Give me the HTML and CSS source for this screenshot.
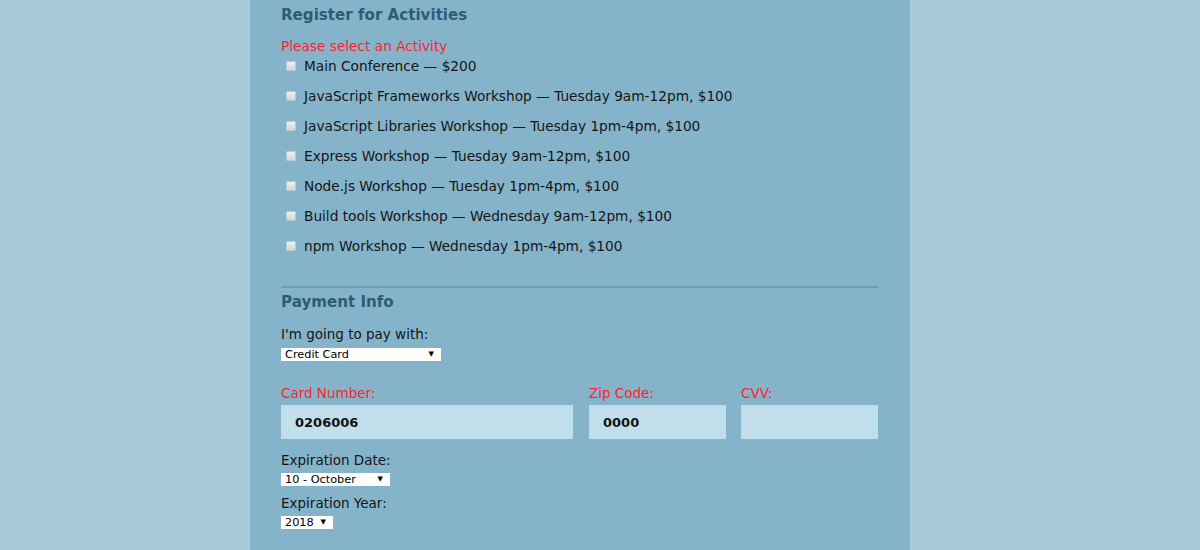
FILE: index.html
```html
<!DOCTYPE html>
<html>
<head>
<meta charset="utf-8">
<link rel="stylesheet" href="styles.css">
</head>
<body>
<div class="page">
  <form class="column">
    <fieldset class="activities">
      <h2 class="legend">Register for Activities</h2>
      <p class="error">Please select an Activity</p>
      <label class="activity"><input type="checkbox"><span>Main Conference — $200</span></label>
      <label class="activity"><input type="checkbox"><span>JavaScript Frameworks Workshop — Tuesday 9am-12pm, $100</span></label>
      <label class="activity"><input type="checkbox"><span>JavaScript Libraries Workshop — Tuesday 1pm-4pm, $100</span></label>
      <label class="activity"><input type="checkbox"><span>Express Workshop — Tuesday 9am-12pm, $100</span></label>
      <label class="activity"><input type="checkbox"><span>Node.js Workshop — Tuesday 1pm-4pm, $100</span></label>
      <label class="activity"><input type="checkbox"><span>Build tools Workshop — Wednesday 9am-12pm, $100</span></label>
      <label class="activity"><input type="checkbox"><span>npm Workshop — Wednesday 1pm-4pm, $100</span></label>
    </fieldset>
    <fieldset class="payment">
      <h2 class="legend">Payment Info</h2>
      <label class="label">I'm going to pay with:</label>
      <div class="select sel-pay"><span>Credit Card</span><span class="arrow">▼</span></div>
      <div class="card-row">
        <div class="field f-card">
          <label class="label red">Card Number:</label>
          <input class="text" type="text" value="0206006">
        </div>
        <div class="field f-zip">
          <label class="label red">Zip Code:</label>
          <input class="text" type="text" value="0000">
        </div>
        <div class="field f-cvv">
          <label class="label red">CVV:</label>
          <input class="text" type="text" value="">
        </div>
      </div>
      <label class="label exp">Expiration Date:</label>
      <div class="select sel-month"><span>10 - October</span><span class="arrow">▼</span></div>
      <label class="label exp">Expiration Year:</label>
      <div class="select sel-year"><span>2018</span><span class="arrow">▼</span></div>
    </fieldset>
  </form>
</div>
</body>
</html>
```

FILE: styles.css
```css
html, body {
  margin: 0;
  padding: 0;
  height: 100%;
}
body {
  background: #a9cad7;
  font-family: "DejaVu Sans", "Liberation Sans", sans-serif;
  color: #151515;
  overflow: hidden;
}
.page {
  display: flex;
  justify-content: center;
  height: 100%;
}
.column {
  width: 660px;
  margin-right: 40px;
  background: #85b4ca;
  padding: 0 32px 0 31px;
  box-sizing: border-box;
  height: 100%;
}
fieldset {
  border: 0;
  margin: 0;
  padding: 0;
}
.legend {
  margin: 0;
  font-size: 15.1px;
  font-weight: bold;
  color: #2d5d75;
  line-height: 20px;
}
.activities {
  padding-top: 5px;
  border-bottom: 2px solid #6a9fb8;
  padding-bottom: 32px;
}
.error {
  margin: 13px 0 0;
  font-size: 13.7px;
  line-height: 16px;
  color: #ff1e2d;
}
.activity {
  display: flex;
  align-items: center;
  font-size: 13.7px;
  line-height: 16px;
  height: 16px;
  margin-top: 14px;
}
.activities .error + .activity {
  margin-top: 4px;
}
.activity input {
  appearance: none;
  -webkit-appearance: none;
  width: 10px;
  height: 10px;
  margin: 0 8px 0 5px;
  background: linear-gradient(#f0f0f0, #d6d6d6);
  border: 1px solid #b7cad2;
  border-radius: 1px;
  box-sizing: border-box;
}
.payment {
  padding-top: 4px;
}
.label {
  display: block;
  font-size: 13.5px;
  line-height: 16px;
}
.payment .legend + .label {
  margin-top: 14px;
}
.payment .legend + .label + .select {
  margin-top: 6px;
}
.red {
  color: #ff1e2d;
}
.select {
  display: flex;
  justify-content: space-between;
  align-items: center;
  background: #fff;
  height: 13px;
  font-size: 11.3px;
  line-height: 13px;
  padding: 0 7px 0 4px;
  box-sizing: border-box;
  color: #000;
  margin-top: 5px;
}
.select .arrow {
  font-size: 7px;
}
.sel-pay { width: 160px; }
.sel-month { width: 109px; }
.sel-year { width: 52px; }
.card-row {
  display: flex;
  gap: 15px;
  margin-top: 24px;
}
.field {
  display: flex;
  flex-direction: column;
}
.f-card { width: 292px; margin-right: 1px; }
.f-zip { width: 137px; }
.f-cvv { width: 137px; }
.text {
  margin-top: 4px;
  height: 34px;
  border: 0;
  background: #c1dfea;
  box-sizing: border-box;
  padding: 0 14px;
  font-family: "DejaVu Sans", "Liberation Sans", sans-serif;
  font-size: 13px;
  font-weight: bold;
  color: #111;
  width: 100%;
}
.exp {
  margin-top: 13px;
}
.sel-month + .label {
  margin-top: 9px;
}
```
